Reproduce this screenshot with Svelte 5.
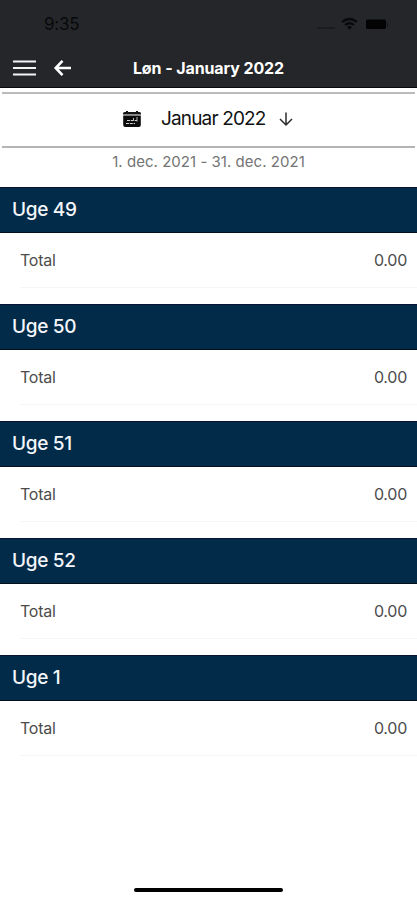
<script>
    let title = 'Løn - January 2022'
    let month = 'Januar 2022'
    let period = '1. dec. 2021 - 31. dec. 2021'

    let weeks = [
        { number: 49, total: 0 },
        { number: 50, total: 0 },
        { number: 51, total: 0 },
        { number: 52, total: 0 },
        { number: 1, total: 0 },
    ]
</script>

<style>
    :global(body) {
        margin: 0;
        background: #fff;
    }

    .screen {
        box-sizing: border-box;
        display: flex;
        flex-direction: column;
        height: 900px;
        overflow: hidden;
        background: #fff;
        font-family: Inter, "Liberation Sans", sans-serif;
    }

    svg {
        display: block;
    }

    button {
        all: unset;
        cursor: pointer;
    }

    .top {
        box-sizing: border-box;
        height: 88px;
        background: #252629;
        border-bottom: 1px solid #08090b;
    }

    .status {
        display: flex;
        align-items: center;
        justify-content: space-between;
        height: 48px;
        padding: 0 27px 0 44px;
        color: #08090b;
    }

    .time {
        font-size: 17px;
        line-height: 20px;
        letter-spacing: -0.2px;
    }

    .navbar {
        display: grid;
        grid-template-columns: 80px 1fr 80px;
        align-items: center;
        height: 40px;
        color: #fff;
    }

    .actions {
        display: flex;
        align-items: center;
        gap: 17px;
        padding-left: 12px;
    }

    h1 {
        margin: 0;
        font-size: 16px;
        line-height: 20px;
        font-weight: 700;
        letter-spacing: -0.1px;
        text-align: center;
        white-space: nowrap;
    }

    .picker {
        box-sizing: border-box;
        display: flex;
        align-items: center;
        height: 56px;
        margin: 4px 2px 0;
        padding: 0 0 2px 120px;
        border-top: 2px solid #bcbabc;
        border-bottom: 2px solid #b4b4b4;
        color: #111;
    }

    .month {
        margin: 0 13px 0 19px;
        font-size: 19px;
        line-height: 24px;
        letter-spacing: -0.85px;
        white-space: nowrap;
    }

    .period {
        height: 39px;
        font-size: 15px;
        line-height: 27px;
        letter-spacing: 0.03px;
        text-align: center;
        color: #747474;
    }

    .week {
        height: 117px;
    }

    h2 {
        box-sizing: border-box;
        height: 46px;
        margin: 0;
        padding-left: 12px;
        border-top: 1px solid #071234;
        border-bottom: 1px solid #03101e;
        background: #012b49;
        color: #f4f6fa;
        font-size: 19px;
        line-height: 44px;
        font-weight: 500;
        letter-spacing: -0.3px;
    }

    .row {
        display: flex;
        justify-content: space-between;
        height: 54px;
        margin-left: 20px;
        padding-right: 10px;
        border-bottom: 1px solid #f5f5f5;
        color: #4c4c4c;
        font-size: 16px;
        line-height: 55px;
        letter-spacing: -0.25px;
    }

    .home {
        width: 149px;
        height: 4px;
        margin: auto auto 8px;
        border-radius: 2px;
        background: #000;
    }
</style>

<div class="screen">
    <header class="top">
        <div class="status">
            <span class="time">9:35</span>
            <svg width="75" height="16" viewBox="0 0 75 16" fill="none">
                <path d="M2 12h18" stroke="#1b1c1f" stroke-width="2" />
                <path d="M27 6q7.500-6 15 0M30 9q4.500-3.500 9 0" stroke="currentColor" stroke-width="2.200" />
                <path d="M32 11q2.500-2 5 0l-2.500 2.700z" fill="currentColor" />
                <rect x="51" y="3.500" width="20" height="9.500" rx="1.500" fill="#030304" />
                <path d="M72.500 6.500v4" stroke="#17181a" stroke-width="1.500" />
            </svg>
        </div>
        <nav class="navbar">
            <div class="actions">
                <button aria-label="Menu">
                    <svg width="24" height="18" viewBox="0 0 24 18" fill="none" stroke="#f4f4f4" stroke-width="2.200">
                        <path d="M1 2.500h23M1 9h23M1 15.500h23" />
                    </svg>
                </button>
                <button aria-label="Back">
                    <svg width="19" height="18" viewBox="0 0 19 18" fill="none" stroke="currentColor" stroke-width="2.600">
                        <path d="M9.500 1.800L2.700 9l6.800 7.200M3 9h15" />
                    </svg>
                </button>
            </div>
            <h1>{title}</h1>
        </nav>
    </header>

    <div class="picker">
        <svg width="20" height="18" viewBox="0 0 20 18">
            <path d="M2.500 2H4V1h2v1h8V1h2v1h1.500q1.500 0 1.500 1.500v1H1v-1Q1 2 2.500 2z" fill="#151515" />
            <path d="M1.200 5.500h17.600V15q0 2-2 2H3.200q-2 0-2-2z" fill="#0b0b0b" />
            <path d="M5 10.500h10M4 13.500h9" stroke="#d0d0d0" stroke-dasharray="3 .8" />
            <path d="M15 7v4.500M11.500 8v2" stroke="#b8b8b8" />
        </svg>
        <span class="month">{month}</span>
        <svg width="14" height="16" viewBox="0 0 14 16" fill="none" stroke="#2c2c2c" stroke-width="1.500">
            <path d="M7 1.500v12.500M1 8l6 6 6-6" />
        </svg>
    </div>
    <div class="period">{period}</div>

    {#each weeks as week}
        <section class="week">
            <h2>Uge {week.number}</h2>
            <div class="row">
                <span>Total</span>
                <span>{week.total.toFixed(2)}</span>
            </div>
        </section>
    {/each}

    <div class="home"></div>
</div>
